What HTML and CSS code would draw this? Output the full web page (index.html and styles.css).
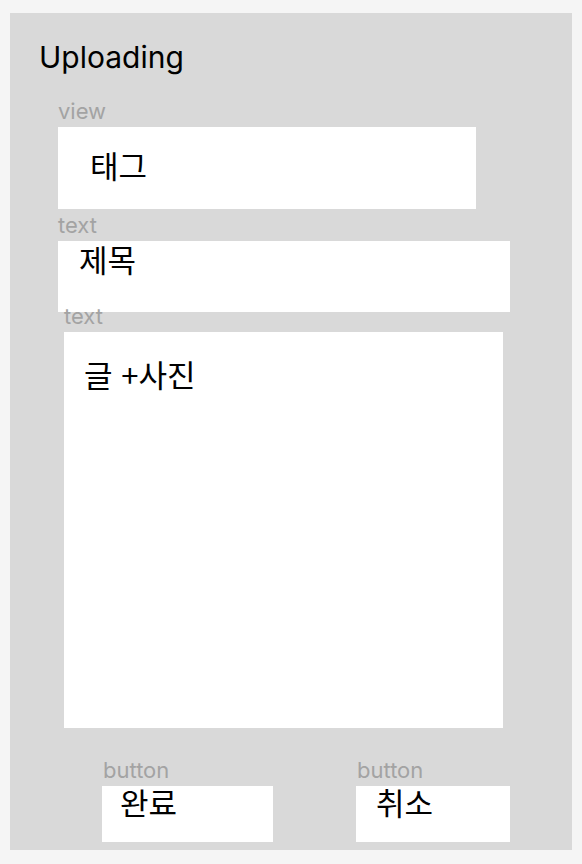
FILE: index.html
```html
<!DOCTYPE html>
<html lang="ko">
<head>
<meta charset="utf-8">
<link rel="stylesheet" href="styles.css">
</head>
<body>
<div class="frame">
  <h1 class="title">Uploading</h1>
  <div class="label label-view">view</div>
  <div class="box box-tag"><span class="ko">태그</span></div>
  <div class="label label-text1">text</div>
  <div class="box box-title"><span class="ko">제목</span></div>
  <div class="label label-text2">text</div>
  <div class="box box-body"><span class="ko">글 +사진</span></div>
  <div class="buttons">
    <div class="btn-col btn-col-ok">
      <div class="label">button</div>
      <div class="box btn btn-ok"><span class="ko">완료</span></div>
    </div>
    <div class="btn-col btn-col-cancel">
      <div class="label">button</div>
      <div class="box btn btn-cancel"><span class="ko">취소</span></div>
    </div>
  </div>
</div>
</body>
</html>
```
FILE: styles.css
```css
* { box-sizing: border-box; }
html, body { margin: 0; padding: 0; }
body {
  background: #f5f5f5;
  font-family: Inter, "Noto Sans CJK KR", sans-serif;
  width: 582px;
  height: 864px;
  overflow: hidden;
}
.frame {
  margin: 13px 0 0 10px;
  width: 562px;
  height: 837px;
  background: #d9d9d9;
  padding-top: 27px;
  display: flex;
  flex-direction: column;
  align-items: flex-start;
}
.title {
  margin: 0 0 0 29px;
  font-weight: 400;
  font-size: 30px;
  line-height: 35px;
  color: #000;
}
.label {
  font-family: Inter, sans-serif;
  font-size: 22px;
  line-height: 24px;
  color: #a3a3a3;
}
.label-view { margin: 24px 0 0 48px; }
.label-text1 { margin: 4px 0 0 48px; }
.label-text2 { margin: -8px 0 0 54px; }
.box {
  background: #fff;
  margin-top: 4px;
}
.ko {
  font-family: "Noto Sans CJK KR", sans-serif;
  font-size: 31px;
  line-height: 28px;
  color: #000;
  display: block;
}
.box-tag {
  margin-left: 48px;
  width: 418px;
  height: 82px;
  padding: 24px 0 0 32px;
}
.box-title {
  margin-left: 48px;
  width: 452px;
  height: 71px;
  padding: 4px 0 0 21px;
}
.box-body {
  margin-left: 54px;
  width: 439px;
  height: 396px;
  padding: 28px 0 0 20px;
}
.buttons {
  display: flex;
  gap: 83px;
  margin: 30px 0 0 92px;
}
.btn-col { display: flex; flex-direction: column; }
.btn-col .label { margin-left: 1px; }
.btn { height: 56px; padding-top: 2px; }
.btn-ok { width: 171px; padding-left: 18px; }
.btn-cancel { width: 154px; padding-left: 20px; }
```
